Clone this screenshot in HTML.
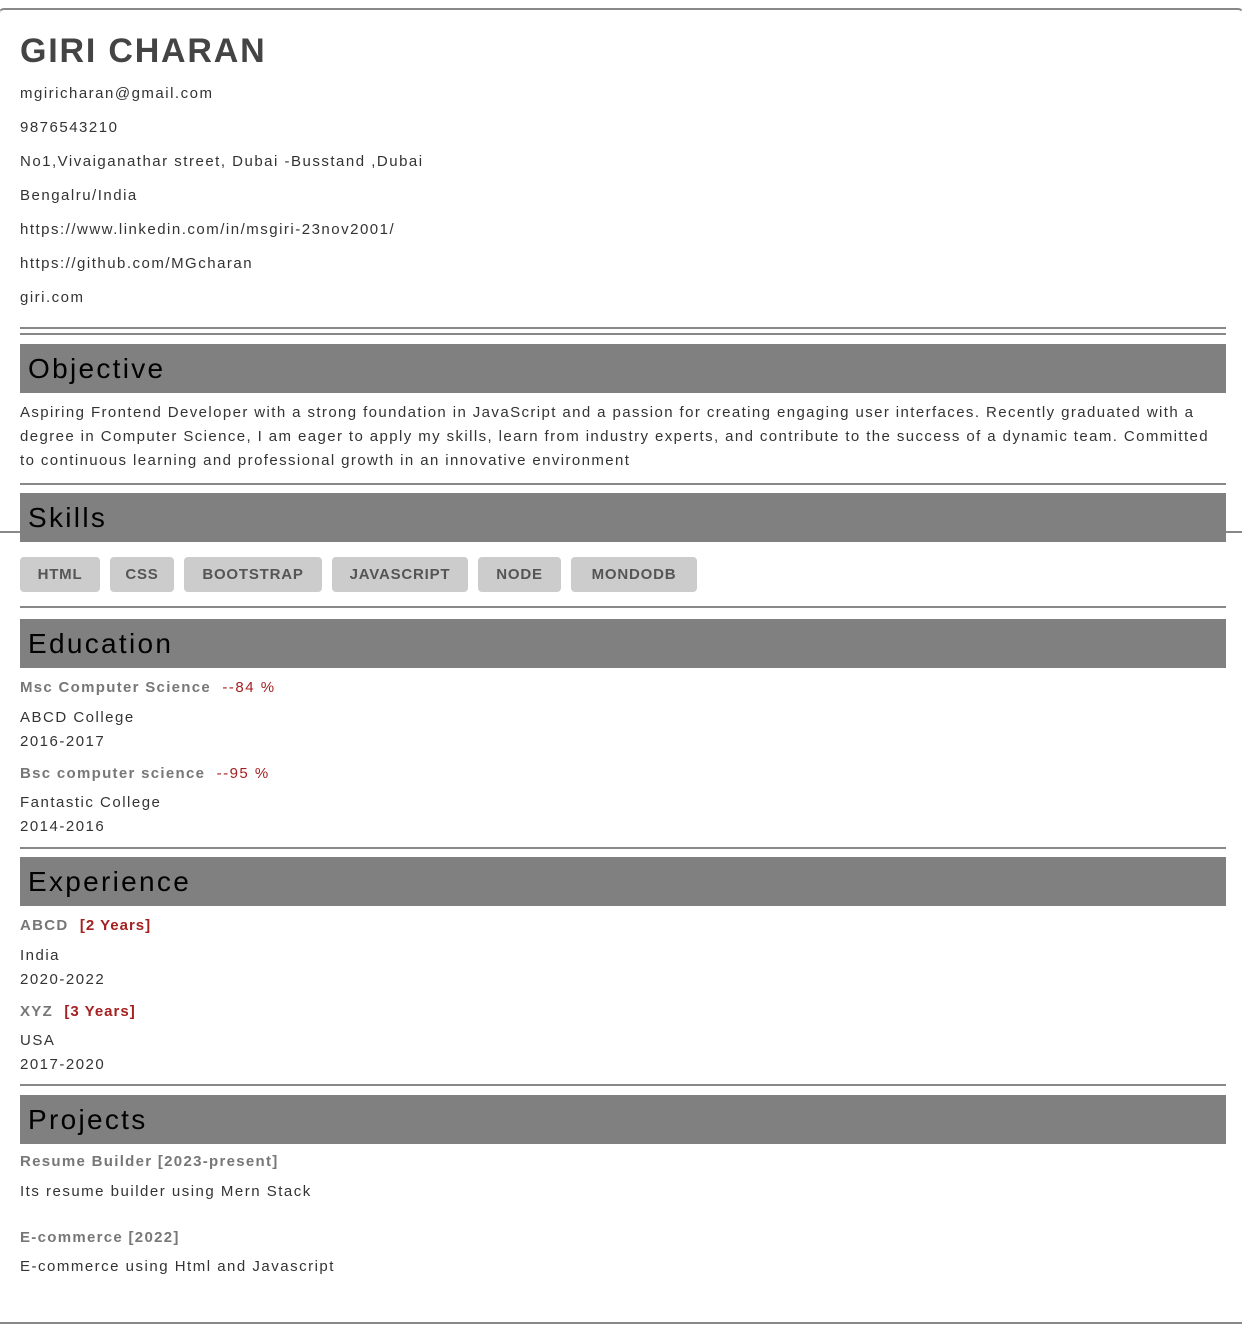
<!DOCTYPE html>
<html><head><meta charset="utf-8"><style>
*{margin:0;padding:0;box-sizing:border-box}
body{width:1242px;height:1328px;background:#fff;position:relative;overflow:hidden;font-family:"Liberation Sans",sans-serif;color:#333}
.t{position:absolute;left:20px;white-space:nowrap;font-size:15px;line-height:20px;letter-spacing:1.5px;margin-top:1px}
.b{font-weight:bold;color:#777;letter-spacing:1.3px}
.r{color:#a52020}
.hr{position:absolute;left:20px;width:1206px;height:2px;background:#888}
.h{position:absolute;left:20px;width:1206px;height:49px;background:#808080;color:#000;font-size:28px;line-height:49px;padding-left:8px;letter-spacing:2.3px}
.chip{position:absolute;top:557px;height:35px;background:#ccc;border-radius:4px;font-weight:bold;font-size:15px;color:#555;line-height:35px;text-align:center;letter-spacing:0.8px}
.box{position:absolute;border:2px solid #888}
</style></head><body>
<div class="box" style="left:-2px;top:8px;width:1246px;height:526px;border-radius:6px;border-left-color:#ccc;border-right-color:#eee"></div>
<div style="position:absolute;left:-2px;top:1322px;width:1246px;height:2px;background:#888"></div>
<div style="position:absolute;left:0;top:344px;width:1242px;height:190px;background:#fff"></div>
<div style="position:absolute;left:0;top:531px;width:1242px;height:2px;background:#888"></div>

<div class="t" style="top:29px;font-size:34px;line-height:42px;font-weight:bold;color:#444;letter-spacing:1.8px">GIRI CHARAN</div>
<div class="t" style="top:83px">mgiricharan@gmail.com</div>
<div class="t" style="top:117px">9876543210</div>
<div class="t" style="top:151px">No1,Vivaiganathar street, Dubai -Busstand ,Dubai</div>
<div class="t" style="top:185px">Bengalru/India</div>
<div class="t" style="top:219px">https://www.linkedin.com/in/msgiri-23nov2001/</div>
<div class="t" style="top:253px">https://github.com/MGcharan</div>
<div class="t" style="top:287px">giri.com</div>

<div class="hr" style="top:327px"></div>
<div class="hr" style="top:333px"></div>
<div class="h" style="top:344px">Objective</div>
<div class="t" style="top:402px;letter-spacing:1.4px">Aspiring Frontend Developer with a strong foundation in JavaScript and a passion for creating engaging user interfaces. Recently graduated with a</div>
<div class="t" style="top:426px;letter-spacing:1.4px">degree in Computer Science, I am eager to apply my skills, learn from industry experts, and contribute to the success of a dynamic team. Committed</div>
<div class="t" style="top:450px;letter-spacing:1.4px">to continuous learning and professional growth in an innovative environment</div>
<div class="hr" style="top:483px"></div>
<div class="h" style="top:493px">Skills</div>
<div class="chip" style="left:20px;width:80px">HTML</div>
<div class="chip" style="left:110px;width:64px">CSS</div>
<div class="chip" style="left:184px;width:138px">BOOTSTRAP</div>
<div class="chip" style="left:332px;width:136px">JAVASCRIPT</div>
<div class="chip" style="left:478px;width:83px">NODE</div>
<div class="chip" style="left:571px;width:126px">MONDODB</div>
<div class="hr" style="top:606px"></div>
<div class="h" style="top:619px">Education</div>
<div class="t" style="top:677px"><span class="b">Msc Computer Science</span>&nbsp;&nbsp;<span class="r">--84 %</span></div>
<div class="t" style="top:707px">ABCD College</div>
<div class="t" style="top:731px">2016-2017</div>
<div class="t" style="top:763px"><span class="b">Bsc computer science</span>&nbsp;&nbsp;<span class="r">--95 %</span></div>
<div class="t" style="top:792px">Fantastic College</div>
<div class="t" style="top:816px">2014-2016</div>
<div class="hr" style="top:847px"></div>
<div class="h" style="top:857px">Experience</div>
<div class="t" style="top:915px"><span class="b">ABCD</span>&nbsp;&nbsp;<span class="r" style="font-weight:bold;letter-spacing:1px">[2 Years]</span></div>
<div class="t" style="top:945px">India</div>
<div class="t" style="top:969px">2020-2022</div>
<div class="t" style="top:1001px"><span class="b">XYZ</span>&nbsp;&nbsp;<span class="r" style="font-weight:bold;letter-spacing:1px">[3 Years]</span></div>
<div class="t" style="top:1030px">USA</div>
<div class="t" style="top:1054px">2017-2020</div>
<div class="hr" style="top:1084px"></div>
<div class="h" style="top:1095px">Projects</div>
<div class="t b" style="top:1151px">Resume Builder [2023-present]</div>
<div class="t" style="top:1181px">Its resume builder using Mern Stack</div>
<div class="t b" style="top:1227px">E-commerce [2022]</div>
<div class="t" style="top:1256px">E-commerce using Html and Javascript</div>
</body></html>
